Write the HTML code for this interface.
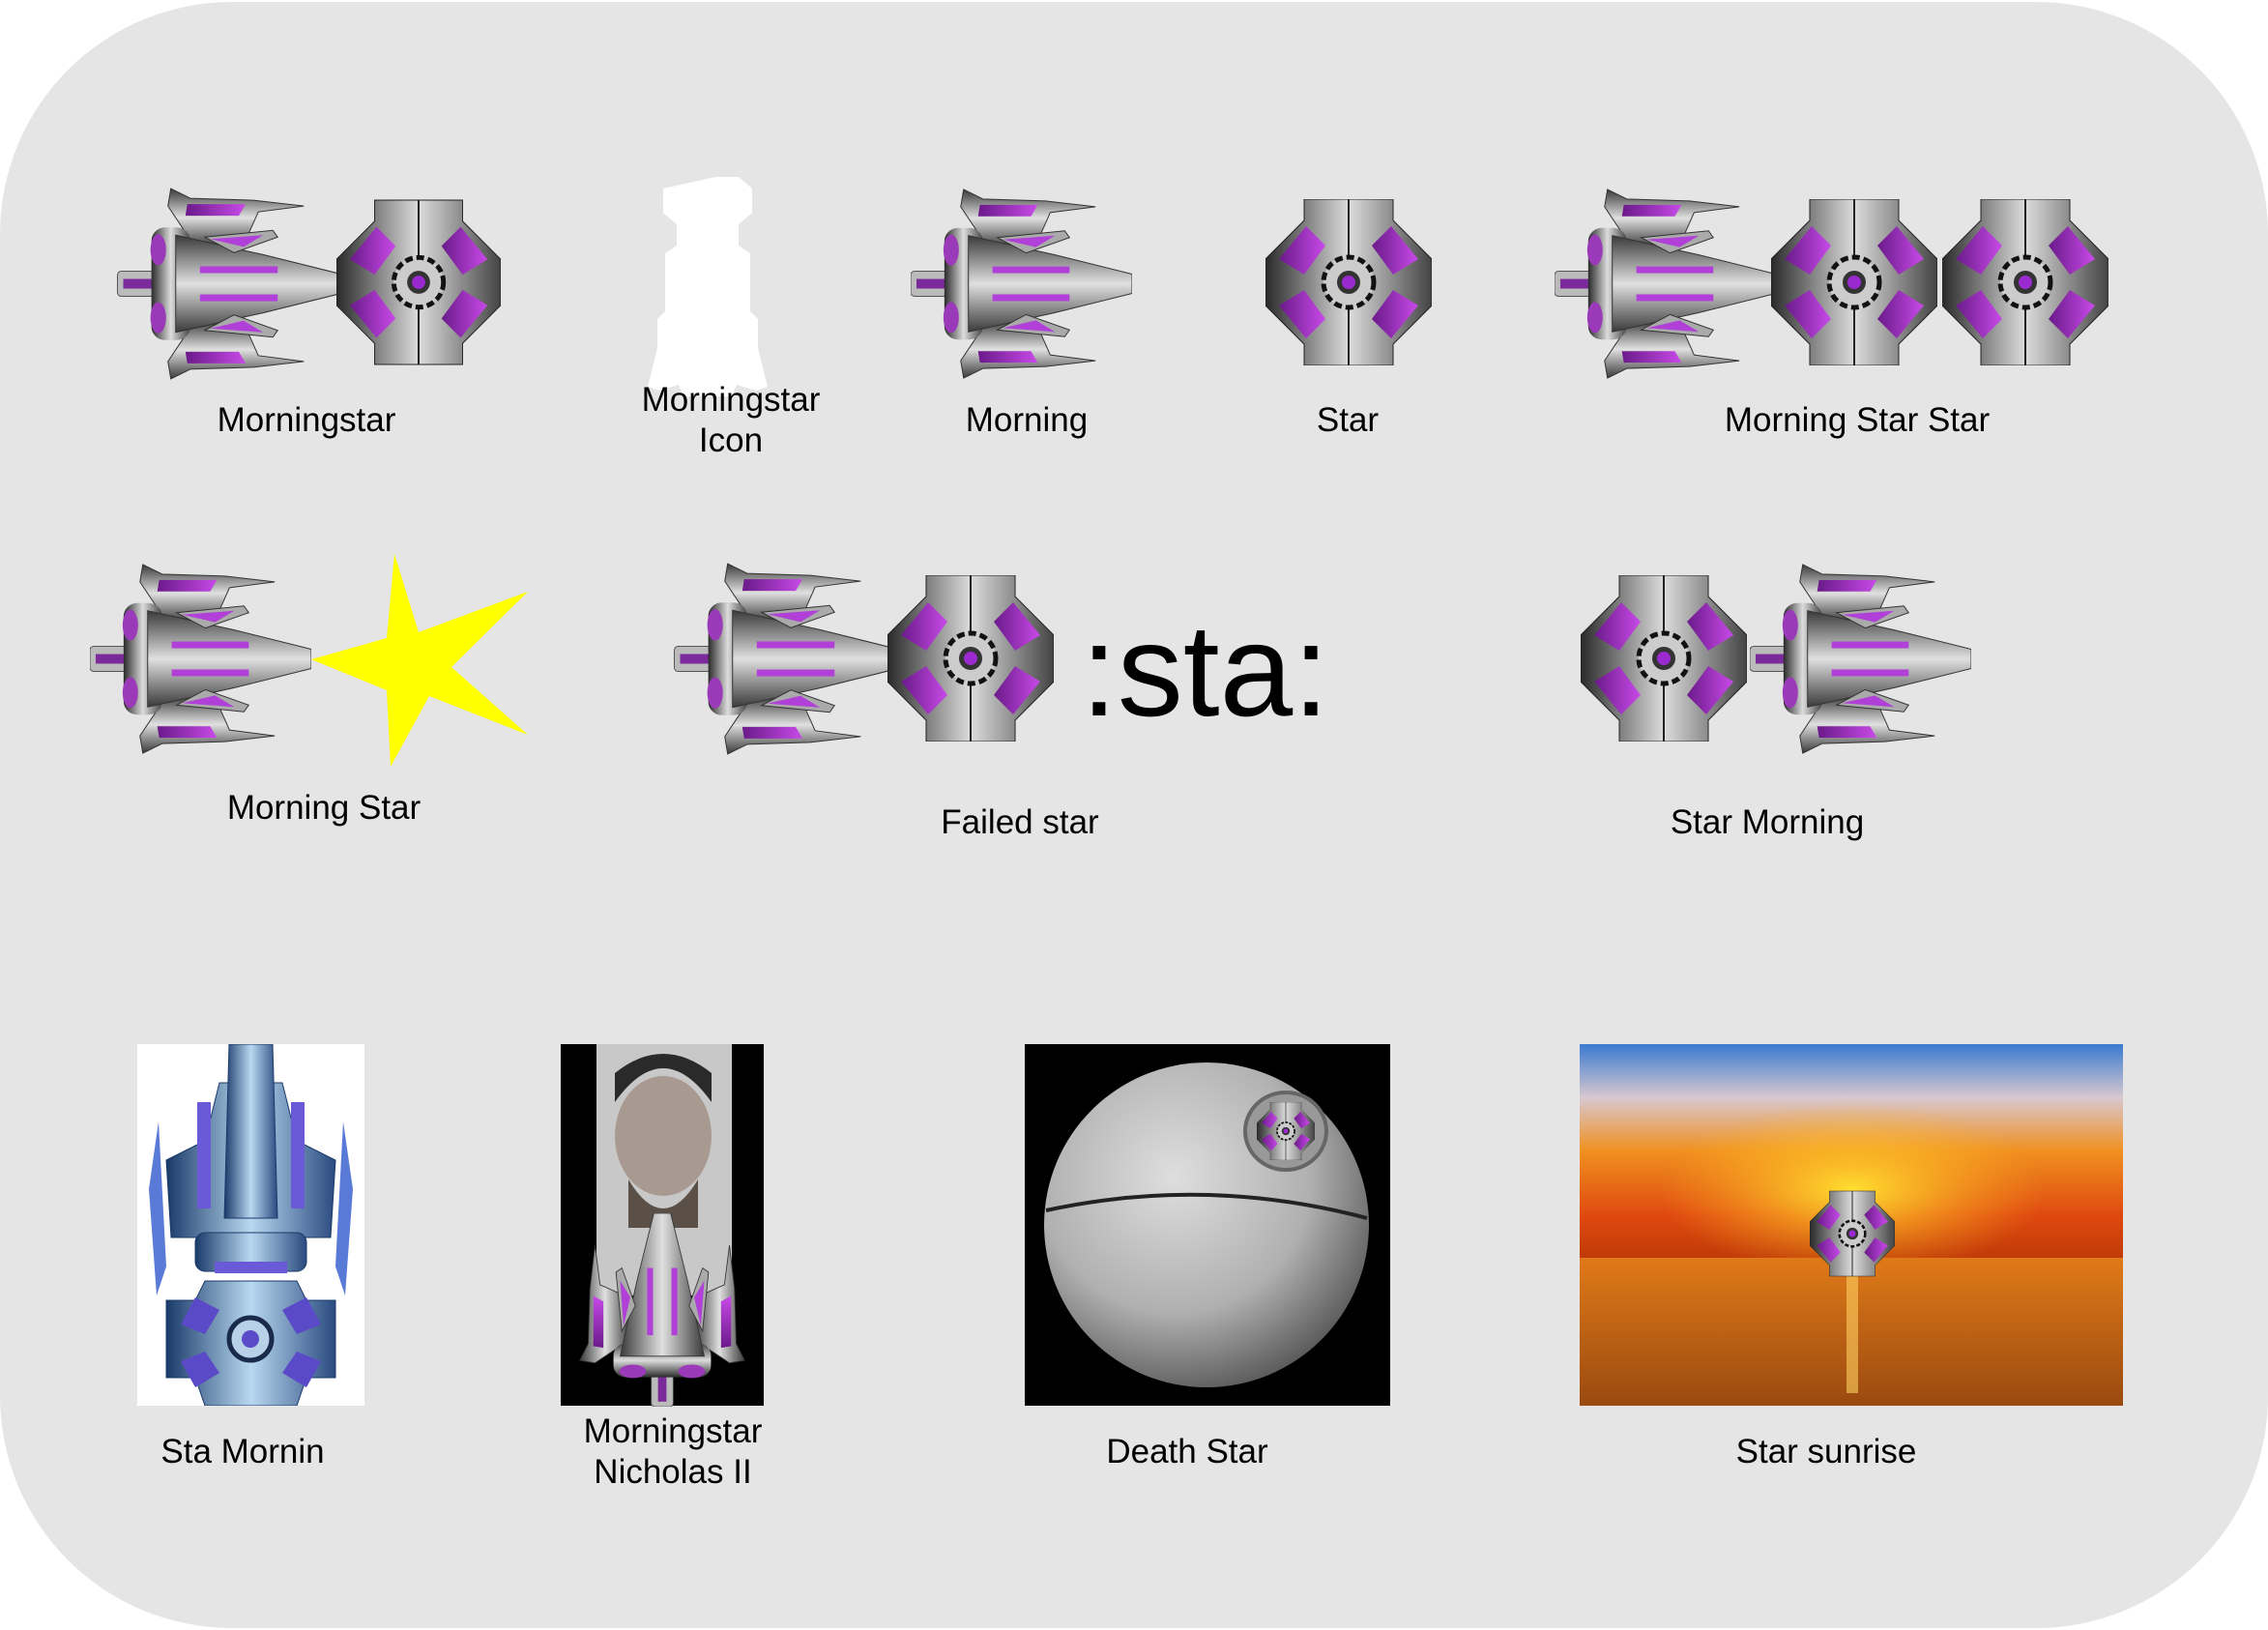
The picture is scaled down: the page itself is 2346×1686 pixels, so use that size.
<!DOCTYPE html>
<html><head><meta charset="utf-8"><style>
html,body{margin:0;padding:0;background:#fff}
body{width:2346px;height:1686px;position:relative;overflow:hidden;font-family:"Liberation Sans",sans-serif}
.bg{position:absolute;left:0;top:2px;width:2346px;height:1682px;background:#e5e5e5;border-radius:240px}
.l{position:absolute;font-size:35px;color:#000;text-align:center;line-height:42px;transform:translateX(-50%);white-space:nowrap}
svg.a{position:absolute;left:0;top:0}
</style></head><body>
<div class="bg"></div>
<svg class="a" width="2346" height="1686" viewBox="0 0 2346 1686">
<defs>
<linearGradient id="gv" x1="0" y1="0" x2="0" y2="1"><stop offset="0" stop-color="#3a3a3a"/><stop offset=".5" stop-color="#e0e0e0"/><stop offset="1" stop-color="#3a3a3a"/></linearGradient>
<linearGradient id="gh" x1="0" y1="0" x2="1" y2="0"><stop offset="0" stop-color="#2a2a2a"/><stop offset=".5" stop-color="#dcdcdc"/><stop offset="1" stop-color="#444"/></linearGradient>
<linearGradient id="bh" x1="0" y1="0" x2="1" y2="0"><stop offset="0" stop-color="#1a3a6a"/><stop offset=".5" stop-color="#b8d8f0"/><stop offset="1" stop-color="#2a4a80"/></linearGradient>
<linearGradient id="pu" x1="0" y1="0" x2="1" y2="0"><stop offset="0" stop-color="#6a1a8a"/><stop offset="1" stop-color="#c84ae8"/></linearGradient>
<radialGradient id="ds" cx=".4" cy=".35" r=".7"><stop offset="0" stop-color="#dedede"/><stop offset=".6" stop-color="#b0b0b0"/><stop offset="1" stop-color="#555"/></radialGradient>
<linearGradient id="sky" x1="0" y1="0" x2="0" y2="1"><stop offset="0" stop-color="#3a7ad0"/><stop offset=".25" stop-color="#d8c8d0"/><stop offset=".5" stop-color="#f09020"/><stop offset=".8" stop-color="#e04a10"/><stop offset="1" stop-color="#c03a08"/></linearGradient>
<linearGradient id="sea" x1="0" y1="0" x2="0" y2="1"><stop offset="0" stop-color="#e07a18"/><stop offset="1" stop-color="#9a4a10"/></linearGradient>
<radialGradient id="sun" cx=".5" cy=".5" r=".5"><stop offset="0" stop-color="#ffe030"/><stop offset="1" stop-color="#ffb020" stop-opacity="0"/></radialGradient>
<clipPath id="c1"><rect x="142" y="1080" width="235" height="374"/></clipPath>
<symbol id="F" viewBox="0 0 230 220">
 <polygon points="55,12 75,22 140,24 192,30 145,36 130,70 80,72 52,30" fill="url(#gv)" stroke="#333" stroke-width="1"/>
 <polygon points="72,28 132,28 125,40 70,40" fill="url(#pu)"/>
 <polygon points="55,208 75,198 140,196 192,190 145,184 130,150 80,148 52,190" fill="url(#gv)" stroke="#333" stroke-width="1"/>
 <polygon points="72,192 132,192 125,180 70,180" fill="url(#pu)"/>
 <rect x="0" y="97" width="45" height="26" rx="4" fill="#bbb" stroke="#555"/>
 <rect x="6" y="105" width="36" height="10" fill="#7a2a9a"/>
 <rect x="35" y="52" width="40" height="116" rx="14" fill="url(#gh)"/>
 <ellipse cx="42" cy="75" rx="8" ry="16" fill="#9a3ab8"/><ellipse cx="42" cy="145" rx="8" ry="16" fill="#9a3ab8"/>
 <polygon points="60,60 150,80 230,100 230,120 150,140 60,160" fill="url(#gv)" stroke="#333"/>
 <rect x="85" y="92" width="80" height="7" fill="#b040d8"/><rect x="85" y="121" width="80" height="7" fill="#b040d8"/>
 <polygon points="90,62 160,55 165,62 120,78" fill="#aaa" stroke="#333"/><polygon points="96,64 150,60 130,72" fill="#b040d8"/>
 <polygon points="90,158 160,165 165,158 120,142" fill="#aaa" stroke="#333"/><polygon points="96,156 150,160 130,148" fill="#b040d8"/>
</symbol>
<symbol id="P" viewBox="0 0 172 172">
 <polygon points="40,0 132,0 132,22 172,62 172,110 132,150 132,172 40,172 40,150 0,110 0,62 40,22" fill="url(#gh)" stroke="#222"/>
 <line x1="86" y1="0" x2="86" y2="172" stroke="#222" stroke-width="2"/>
 <polygon points="42,28 62,48 40,78 14,62" fill="url(#pu)"/><polygon points="130,28 110,48 132,78 158,62" fill="url(#pu)"/>
 <polygon points="42,144 62,124 40,94 14,110" fill="url(#pu)"/><polygon points="130,144 110,124 132,94 158,110" fill="url(#pu)"/>
 <circle cx="86" cy="86" r="26" fill="#ccc" stroke="#111" stroke-width="5" stroke-dasharray="8 4"/>
 <circle cx="86" cy="86" r="12" fill="#333"/><circle cx="86" cy="86" r="7" fill="#9a2ad0"/>
</symbol>
</defs>
<!-- Row 1 -->
<use href="#F" x="112" y="183" width="250" height="221"/><use href="#P" x="348" y="206" width="170" height="172"/>
<path d="M740,183h24l14,12v25l-14,12v22l12,8v60l8,8v30l10,40l-12,4l-20-6l-5,12h-50l-5-12l-20,6l-12-4l10-40v-30l8-8v-60l12-8v-22l-14-12v-25z" fill="#fff"/>
<use href="#F" x="942" y="183" width="229" height="221"/>
<use href="#P" x="1309" y="206" width="172" height="172"/>
<use href="#F" x="1608" y="183" width="229" height="221"/><use href="#P" x="1832" y="206" width="172" height="172"/><use href="#P" x="2009" y="206" width="172" height="172"/>
<!-- Row 2 -->
<use href="#F" x="93" y="571" width="229" height="221"/>
<polygon points="408,573 433,654 546,612 467,690 546,760 444,720 404,793 400,714 322,682 400,660" fill="#ffff00"/>
<use href="#F" x="688" y="571" width="250" height="221"/><use href="#P" x="918" y="595" width="172" height="172"/>
<text x="1118" y="740" font-family="Liberation Sans,sans-serif" font-size="136" fill="#000">:sta:</text>
<use href="#P" x="1635" y="595" width="172" height="172"/><use href="#F" x="1810" y="571" width="229" height="221"/>
<!-- Row 3 -->
<rect x="142" y="1080" width="235" height="374" fill="#fff"/>
<g clip-path="url(#c1)"><g transform="translate(142,1080)">
 <polygon points="12,150 22,80 30,230 20,260" fill="#5a7ad8"/><polygon points="223,150 213,80 205,230 215,260" fill="#5a7ad8"/>
 <polygon points="30,120 70,100 85,40 150,40 165,100 205,120 200,200 35,200" fill="url(#bh)" stroke="#1a3a6a"/>
 <polygon points="95,0 140,0 145,180 90,180" fill="url(#bh)" stroke="#1a3a6a"/>
 <rect x="62" y="60" width="14" height="110" fill="#6a5ad8"/><rect x="159" y="60" width="14" height="110" fill="#6a5ad8"/>
 <rect x="60" y="195" width="115" height="40" rx="10" fill="url(#bh)" stroke="#1a3a6a"/>
 <rect x="80" y="225" width="75" height="12" fill="#6a5ad8"/>
 <polygon points="70,245 165,245 175,265 205,265 205,345 175,345 165,374 70,374 60,345 30,345 30,265 60,265" fill="url(#bh)" stroke="#1a3a6a"/>
 <polygon points="60,262 85,275 70,300 45,290" fill="#5a4ac8"/><polygon points="175,262 150,275 165,300 190,290" fill="#5a4ac8"/>
 <polygon points="60,355 85,340 70,318 45,328" fill="#5a4ac8"/><polygon points="175,355 150,340 165,318 190,328" fill="#5a4ac8"/>
 <circle cx="117" cy="305" r="22" fill="#b8d0e8" stroke="#1a2a4a" stroke-width="5"/><circle cx="117" cy="305" r="9" fill="#5a4ac8"/>
</g></g>
<rect x="580" y="1080" width="210" height="374" fill="#000"/>
<rect x="617" y="1080" width="140" height="260" fill="#c8c8c8"/>
<ellipse cx="686" cy="1175" rx="50" ry="62" fill="#a89a90"/><path d="M636,1140q50-70 100,0v-30q-50-40-100,0z" fill="#2a2a2a"/>
<path d="M650,1220q36,60 72,0v50h-72z" fill="#5a5048"/>
<g transform="translate(685,1455) rotate(-90)"><use href="#F" x="0" y="-105" width="200" height="210"/></g>
<rect x="1060" y="1080" width="378" height="374" fill="#000"/>
<circle cx="1248" cy="1267" r="168" fill="url(#ds)"/>
<path d="M1082,1252q166,-36 332,8" stroke="#222" stroke-width="4" fill="none"/>
<ellipse cx="1330" cy="1170" rx="42" ry="40" fill="#999" stroke="#666" stroke-width="4"/>
<use href="#P" x="1300" y="1140" width="60" height="60"/>
<rect x="1634" y="1080" width="562" height="221" fill="url(#sky)"/>
<ellipse cx="1916" cy="1230" rx="200" ry="90" fill="url(#sun)"/>
<rect x="1634" y="1301" width="562" height="153" fill="url(#sea)"/>
<rect x="1910" y="1301" width="12" height="140" fill="#ffd060" opacity=".6"/>
<use href="#P" x="1872" y="1228" width="88" height="96"/>
</svg>
<div class="l" style="left:317px;top:414px">Morningstar</div>
<div class="l" style="left:756px;top:393px">Morningstar<br>Icon</div>
<div class="l" style="left:1062px;top:414px">Morning</div>
<div class="l" style="left:1394px;top:414px">Star</div>
<div class="l" style="left:1921px;top:414px">Morning Star Star</div>
<div class="l" style="left:335px;top:815px">Morning Star</div>
<div class="l" style="left:1055px;top:830px">Failed star</div>
<div class="l" style="left:1828px;top:830px">Star Morning</div>
<div class="l" style="left:251px;top:1481px">Sta Mornin</div>
<div class="l" style="left:696px;top:1460px">Morningstar<br>Nicholas II</div>
<div class="l" style="left:1228px;top:1481px">Death Star</div>
<div class="l" style="left:1889px;top:1481px">Star sunrise</div>
</body></html>
